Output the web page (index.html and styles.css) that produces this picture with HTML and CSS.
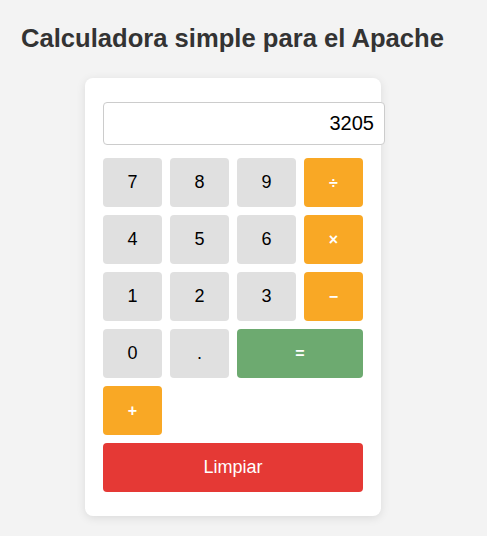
FILE: index.html
```html
<!DOCTYPE html>
<html lang="es">
<head>
<meta charset="utf-8">
<title>Calculadora</title>
<link rel="stylesheet" href="styles.css">
</head>
<body>
<h1 class="title">Calculadora simple para el Apache</h1>
<div class="card">
  <input class="display" type="text" value="3205" readonly>
  <div class="keys">
    <button class="key">7</button>
    <button class="key">8</button>
    <button class="key">9</button>
    <button class="key op">÷</button>
    <button class="key">4</button>
    <button class="key">5</button>
    <button class="key">6</button>
    <button class="key op">×</button>
    <button class="key">1</button>
    <button class="key">2</button>
    <button class="key">3</button>
    <button class="key op">−</button>
    <button class="key">0</button>
    <button class="key">.</button>
    <button class="key eq">=</button>
    <button class="key op">+</button>
    <button class="key clear">Limpiar</button>
  </div>
</div>
</body>
</html>
```
FILE: styles.css
```css
body {
  margin: 0;
  padding: 24px 20px;
  background: #f3f3f3;
  font-family: "Liberation Sans", Arial, sans-serif;
}
.title {
  margin: 0 0 25px 1px;
  font-size: 25.6px;
  font-weight: bold;
  color: #333;
}
.card {
  width: 260px;
  margin-left: 65px;
  padding: 24px 18px;
  background: #fff;
  border-radius: 8px;
  box-shadow: 0 2px 10px rgba(0, 0, 0, 0.1);
}
.display {
  display: block;
  width: 100%;
  height: 41px;
  padding: 0 10px;
  margin: 0 0 13px 0;
  border: 1px solid #ccc;
  border-radius: 4px;
  font-family: "Liberation Sans", Arial, sans-serif;
  font-size: 20px;
  color: #000;
  text-align: right;
  background: #fff;
}
.keys {
  display: grid;
  grid-template-columns: repeat(4, 59px);
  grid-auto-rows: 49px;
  gap: 8px;
}
.key {
  border: none;
  border-radius: 4px;
  background: #e0e0e0;
  color: #000;
  font-family: "Liberation Sans", Arial, sans-serif;
  font-size: 18px;
  padding: 0;
}
.op {
  background: #f9a825;
  color: #fff;
  font-weight: bold;
  font-size: 16px;
}
.eq {
  grid-column: span 2;
  background: #6daa70;
  color: #fff;
  font-weight: bold;
  font-size: 16px;
}
.clear {
  grid-column: 1 / -1;
  background: #e53935;
  color: #fff;
}
```
